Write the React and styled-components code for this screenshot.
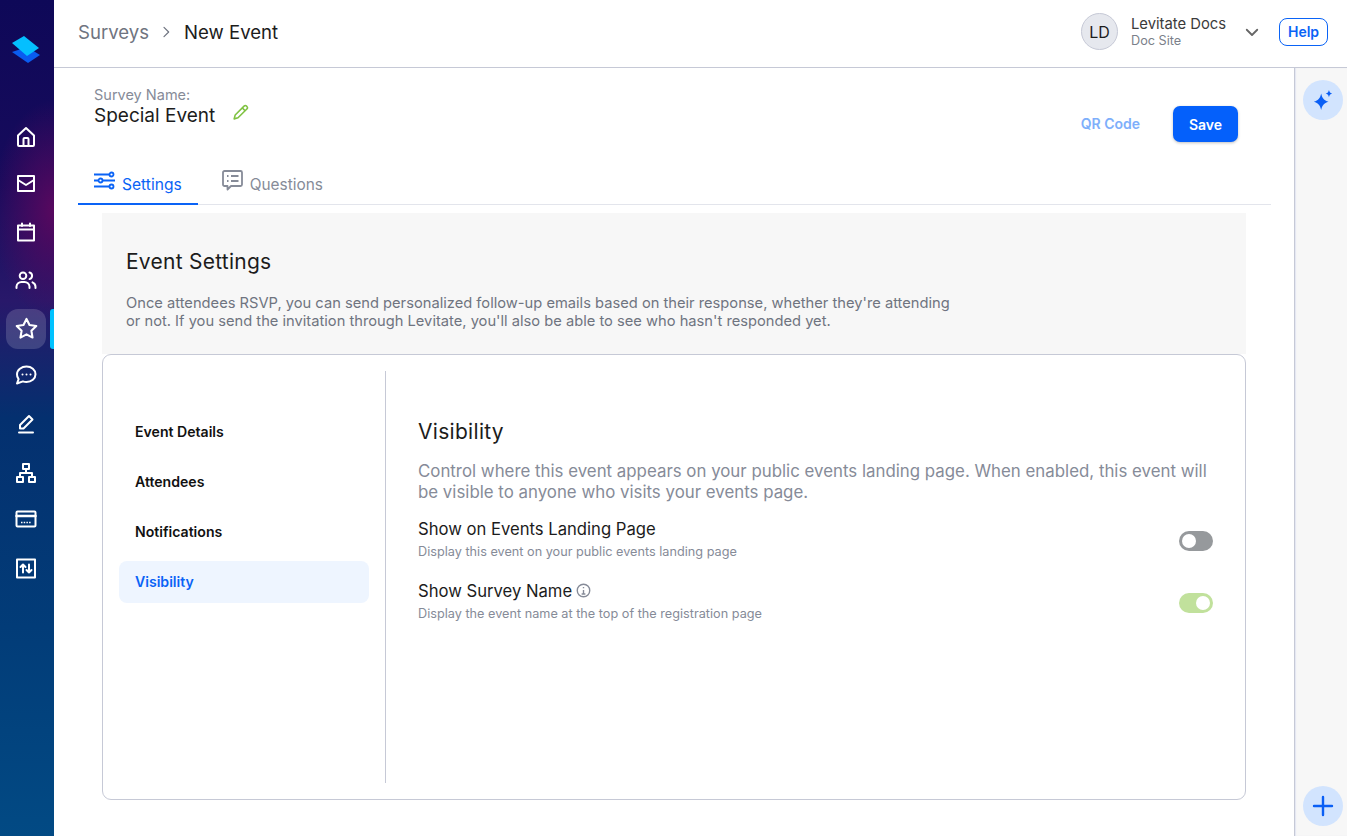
import React from 'react';
import styled, { createGlobalStyle } from 'styled-components';

const Global = createGlobalStyle`
  html, body { margin: 0; padding: 0; height: 100%; background: #fff; }
  * { box-sizing: border-box; }
  body { font-family: Inter, "Noto Sans", sans-serif; color: #1c1c1c; overflow: hidden; }
`;

const Page = styled.div`
  display: flex;
  width: 1347px;
  height: 836px;
  overflow: hidden;
`;

const Sidebar = styled.nav`
  width: 54px;
  flex: none;
  display: flex;
  flex-direction: column;
  align-items: stretch;
  padding-top: 35px;
  background:
    radial-gradient(ellipse 62px 110px at 100% 210px, #58085f 0%, rgba(88, 8, 95, 0) 100%),
    linear-gradient(180deg, #0e0858 0%, #170b5c 22%, #28186a 36%, #04306f 50%, #023c78 75%, #024a84 100%);
`;

const Logo = styled.div`
  height: 30px;
  display: flex;
  justify-content: center;
  margin-left: -2px;
  margin-bottom: 48px;
`;

const NavList = styled.div`
  display: flex;
  flex-direction: column;
`;

const NavItem = styled.div`
  position: relative;
  height: 47.9px;
  display: flex;
  align-items: center;
  justify-content: center;
  margin-right: 2px;
  color: #fff;
`;

const NavTile = styled.div`
  width: 40px;
  height: 40px;
  border-radius: 12px;
  display: flex;
  align-items: center;
  justify-content: center;
  background: ${({ $active }) => ($active ? 'rgba(255,255,255,0.16)' : 'transparent')};
`;

const ActiveMark = styled.span`
  position: absolute;
  right: -2px;
  top: 4px;
  width: 4px;
  height: 40px;
  border-radius: 3px 0 0 3px;
  background: #00c2ff;
`;

const Body = styled.div`
  flex: 1;
  min-width: 0;
  display: flex;
  flex-direction: column;
`;

const Header = styled.header`
  height: 68px;
  flex: none;
  display: flex;
  align-items: center;
  padding: 0 19px 4px 24px;
  border-bottom: 1px solid #c6c9d6;
`;

const Crumbs = styled.div`
  flex: 1;
  display: flex;
  align-items: center;
  font-size: 18.6px;
`;

const CrumbParent = styled.span`
  color: #6f7480;
`;

const CrumbChevron = styled.span`
  display: flex;
  margin: 0 10px 0 9px;
  color: #6f7480;
`;

const Avatar = styled.div`
  width: 37px;
  height: 37px;
  border-radius: 50%;
  display: flex;
  align-items: center;
  justify-content: center;
  background: #e6e8ee;
  border: 1px solid #c6c9d6;
  font-size: 16px;
  margin-right: 13px;
`;

const UserBlock = styled.div`
  display: flex;
  flex-direction: column;
  width: 112px;
`;

const UserName = styled.span`
  font-size: 14.8px;
  line-height: 18px;
  color: #3b3b3b;
`;

const UserSub = styled.span`
  font-size: 12.7px;
  line-height: 15px;
  color: #7b7f8a;
`;

const Caret = styled.span`
  display: flex;
  color: #666;
  margin: 0 18px 0 0;
`;

const HelpButton = styled.button`
  width: 49px;
  height: 28px;
  background: #fff;
  border: 1px solid #0a63f6;
  border-radius: 8px;
  color: #0a63f6;
  font: 600 14px Inter, sans-serif;
  padding: 0;
`;

const Split = styled.div`
  flex: 1;
  display: flex;
  min-height: 0;
`;

const Main = styled.main`
  flex: 1;
  min-width: 0;
  padding: 0 23px 0 24px;
`;

const TitleRow = styled.div`
  height: 93px;
  display: flex;
  justify-content: space-between;
  padding: 18px 33px 0 16px;
`;

const SurveyLabel = styled.div`
  font-size: 14.5px;
  line-height: 18px;
  color: #868b98;
`;

const SurveyName = styled.div`
  display: flex;
  align-items: flex-start;
  gap: 17px;
  margin-top: 1px;
  font-size: 19px;
  line-height: 22px;
`;

const PencilWrap = styled.span`
  display: flex;
  margin-top: -1px;
`;

const Actions = styled.div`
  display: flex;
  align-items: flex-start;
  gap: 33px;
  padding-top: 20px;
`;

const QrLink = styled.span`
  font-size: 14px;
  font-weight: 600;
  line-height: 36px;
  color: #7eaffb;
`;

const SaveButton = styled.button`
  width: 65px;
  height: 36px;
  background: #0460fb;
  border: 0;
  border-radius: 7px;
  color: #fff;
  font: 600 14px Inter, sans-serif;
  box-shadow: 0 1px 3px rgba(0, 0, 0, 0.25);
`;

const Tabs = styled.div`
  display: flex;
  height: 44px;
  border-bottom: 1px solid #e3e5ec;
`;

const Tab = styled.div`
  display: flex;
  align-items: center;
  gap: 7px;
  height: 44px;
  padding: 4px 16px 0;
  margin-left: ${({ $active }) => ($active ? '0' : '8px')};
  font-size: ${({ $active }) => ($active ? '15.6px' : '15.4px')};
  color: ${({ $active }) => ($active ? '#0a63f6' : '#868b98')};
  border-bottom: 2px solid ${({ $active }) => ($active ? '#0a63f6' : 'transparent')};
  svg { margin-top: -8px; }
`;

const Content = styled.div`
  margin: 8px 25px 0 24px;
`;

const IntroPanel = styled.section`
  height: 141px;
  padding: 36px 24px 0;
  background: #f7f7f7;
`;

const IntroTitle = styled.h2`
  margin: 0;
  font-size: 21px;
  letter-spacing: 0.25px;
  font-weight: 400;
  line-height: 26px;
`;

const IntroText = styled.p`
  margin: 19px 0 0;
  width: 835px;
  font-size: 14.7px;
  line-height: 18px;
  color: #6f7480;
`;

const Card = styled.section`
  height: 446px;
  display: flex;
  padding: 16px 0;
  background: #fff;
  border: 1px solid #c6c9d6;
  border-radius: 9px;
`;

const Menu = styled.div`
  width: 283px;
  flex: none;
  padding: 40px 16px 0;
  border-right: 1px solid #c6c9d6;
  display: flex;
  flex-direction: column;
  gap: 8px;
`;

const MenuItem = styled.div`
  height: 42px;
  width: 250px;
  display: flex;
  align-items: center;
  padding: 0 0 1px 16px;
  border-radius: 8px;
  font-size: 14.1px;
  font-weight: 600;
  color: ${({ $active }) => ($active ? '#0a63f6' : '#111')};
  background: ${({ $active }) => ($active ? '#eef5ff' : 'transparent')};
`;

const Detail = styled.div`
  flex: 1;
  padding: 48px 32px 0;
`;

const DetailTitle = styled.h3`
  margin: 0;
  font-size: 21px;
  letter-spacing: 0.3px;
  font-weight: 400;
  line-height: 26px;
`;

const DetailText = styled.p`
  margin: 16px 0 0;
  font-size: 16.85px;
  line-height: 21px;
  color: #868b98;
`;

const SettingRow = styled.div`
  display: flex;
  align-items: center;
  justify-content: space-between;
  height: 43px;
  margin-top: ${({ $gap }) => $gap}px;
`;

const SettingName = styled.div`
  display: flex;
  align-items: center;
  gap: 4px;
  font-size: 16.65px;
  line-height: 22px;
`;

const SettingHint = styled.div`
  font-size: 12.7px;
  line-height: 16px;
  margin-top: 4px;
  color: #868b98;
`;

const Switch = styled.span`
  position: relative;
  display: block;
  width: 34px;
  height: 20px;
  margin-top: 5px;
  border-radius: 10px;
  background: ${({ $on }) => ($on ? '#c1e19c' : '#96999c')};
  &::after {
    content: '';
    position: absolute;
    top: 3px;
    left: ${({ $on }) => ($on ? '17px' : '3px')};
    width: 14px;
    height: 14px;
    border-radius: 50%;
    background: #fff;
  }
`;

const Rail = styled.aside`
  width: 53px;
  flex: none;
  display: flex;
  flex-direction: column;
  justify-content: space-between;
  align-items: center;
  padding: 12px 0 10px 3px;
  background: #f7f7f7;
  border-left: 1px solid #c6c9d6;
  box-shadow: inset 1px 0 1px #e3e6f2;
`;

const RailButton = styled.div`
  width: 40px;
  height: 40px;
  border-radius: 50%;
  display: flex;
  align-items: center;
  justify-content: center;
  background: #d2e4fe;
  color: #0a5ff5;
`;

const Ico = ({ children, size = 24, stroke = 2 }) => (
  <svg width={size} height={size} viewBox="0 0 24 24" fill="none" stroke="currentColor" strokeWidth={stroke} strokeLinecap="round" strokeLinejoin="round">
    {children}
  </svg>
);

const navIcons = [
  <Ico key="home"><path d="M4 10.500 12 3l8 7.500V20a1 1 0 0 1-1 1H5a1 1 0 0 1-1-1z" /><path d="M9.500 21v-7a1 1 0 0 1 1-1h3a1 1 0 0 1 1 1v7" /></Ico>,
  <Ico key="mail"><rect x="4" y="3" width="16" height="15" /><path d="m4 7 8 5 8-5" /></Ico>,
  <Ico key="cal"><rect x="4" y="4.500" width="16" height="15" /><path d="M4 8.500h16M8 2.500V5M16 2.500V5" /></Ico>,
  <Ico key="users"><circle cx="9" cy="6.800" r="3.300" /><path d="M2.500 19v-1.500a5 5 0 0 1 5-4.500h3a5 5 0 0 1 5 4.500V19M15.500 3.500a3.400 3.400 0 0 1 0 6.600M18.500 13.300a5 5 0 0 1 3 4.500V19" /></Ico>,
  <Ico key="star" size={25}><path d="m12 2.800 2.900 5.900 6.500.9-4.700 4.600 1.100 6.500L12 17.650 6.200 20.700l1.100-6.500L2.600 9.600l6.500-.9z" /></Ico>,
  <Ico key="chat"><path d="M12.500 2.500c5 0 9 3.400 9 7.800s-4 7.700-9 7.700c-1.300 0-2.500-.2-3.600-.6L3 19.500l1.600-4.300a7.200 7.200 0 0 1-1.600-4.900c0-4.400 4.500-7.800 9.500-7.800z" /><path d="M8.500 10.500h.01M12.500 10.500h.01M16.500 10.500h.01" /></Ico>,
  <Ico key="edit"><path d="M5 20.500h14" /><path d="M6 16.500V13L15 4l3.500 3.500-9 9z" /></Ico>,
  <Ico key="tree"><rect x="9" y="4" width="6" height="5" /><rect x="3" y="17" width="6" height="5" /><rect x="15" y="17" width="6" height="5" /><path d="M12 9v4M6 17v-4h12v4" /></Ico>,
  <Ico key="card" size={24}><rect x="2.500" y="3.500" width="19" height="15" rx="1" /><path d="M2.500 8h19" strokeWidth="2.500" /><path d="M7 14.500h10" strokeWidth="1.500" strokeDasharray="1.500 1.200" strokeLinecap="butt" /></Ico>,
  <Ico key="swap"><rect x="3" y="3.500" width="18" height="18" /><path d="M9 16.500V8.500M6.500 11 9 8.500l2.500 2.500M15 8.500v8M12.500 14l2.500 2.500 2.500-2.500" /></Ico>,
];

const App = () => (
  <Page>
    <Global />
    <Sidebar>
      <Logo>
        <svg width="30" height="30" viewBox="0 0 30 30">
          <path d="M1 17 17 28 29 20 16 12z" fill="#0a5cf0" />
          <path d="M13 1 28 13 16 21 1 8z" fill="#04bfff" />
        </svg>
      </Logo>
      <NavList>
        {navIcons.map((icon, i) => (
          <NavItem key={i}>
            <NavTile $active={i === 4}>{icon}</NavTile>
            {i === 4 && <ActiveMark />}
          </NavItem>
        ))}
      </NavList>
    </Sidebar>
    <Body>
      <Header>
        <Crumbs>
          <CrumbParent>Surveys</CrumbParent>
          <CrumbChevron>
            <Ico size={16} stroke={1.800}><path d="m9 5 7 7-7 7" /></Ico>
          </CrumbChevron>
          <span>New Event</span>
        </Crumbs>
        <Avatar>LD</Avatar>
        <UserBlock>
          <UserName>Levitate Docs</UserName>
          <UserSub>Doc Site</UserSub>
        </UserBlock>
        <Caret>
          <Ico size={18} stroke={2.400}><path d="m5 9 7 7 7-7" /></Ico>
        </Caret>
        <HelpButton>Help</HelpButton>
      </Header>
      <Split>
        <Main>
          <TitleRow>
            <div>
              <SurveyLabel>Survey Name:</SurveyLabel>
              <SurveyName>
                Special Event
                <PencilWrap>
                  <svg width="17" height="17" viewBox="0 0 24 24" fill="none" stroke="#7fc241" strokeWidth="2.200" strokeLinejoin="round">
                    <path d="M3 21l1.500-5.500L17 3a2.500 2.500 0 0 1 3.500 0l.5.5a2.500 2.500 0 0 1 0 3.500L8.500 19.500z" />
                    <path d="M14.500 5.500l4 4" />
                  </svg>
                </PencilWrap>
              </SurveyName>
            </div>
            <Actions>
              <QrLink>QR Code</QrLink>
              <SaveButton>Save</SaveButton>
            </Actions>
          </TitleRow>
          <Tabs>
            <Tab $active>
              <svg width="21" height="19" viewBox="0 0 21 19" fill="none" stroke="currentColor" strokeWidth="1.800">
                <path d="M0 3.500h15M0 9.500h4M9 9.500h12M0 15.500h15" />
                <circle cx="17.500" cy="3.500" r="2" />
                <circle cx="6.500" cy="9.500" r="2" />
                <circle cx="17.500" cy="15.500" r="2" />
              </svg>
              Settings
            </Tab>
            <Tab>
              <svg width="21" height="21" viewBox="0 0 21 21" fill="none" stroke="currentColor" strokeWidth="1.800" strokeLinejoin="round">
                <path d="M1 2.500A1.500 1.500 0 0 1 2.500 1h16A1.500 1.500 0 0 1 20 2.500v12a1.500 1.500 0 0 1-1.500 1.500H9l-3.500 3.500V16h-3A1.500 1.500 0 0 1 1 14.500z" />
                <path d="M5 6h1.500M9 6h7.500M5 11h1.500M9 11h7.500" />
              </svg>
              Questions
            </Tab>
          </Tabs>
          <Content>
            <IntroPanel>
              <IntroTitle>Event Settings</IntroTitle>
              <IntroText>
                Once attendees RSVP, you can send personalized follow-up emails based on their response, whether they're attending or not. If you send the invitation through Levitate, you'll also be able to see who hasn't responded yet.
              </IntroText>
            </IntroPanel>
            <Card>
              <Menu>
                <MenuItem>Event Details</MenuItem>
                <MenuItem>Attendees</MenuItem>
                <MenuItem>Notifications</MenuItem>
                <MenuItem $active>Visibility</MenuItem>
              </Menu>
              <Detail>
                <DetailTitle>Visibility</DetailTitle>
                <DetailText>
                  Control where this event appears on your public events landing page. When enabled, this event will be visible to anyone who visits your events page.
                </DetailText>
                <SettingRow $gap={14}>
                  <div>
                    <SettingName>Show on Events Landing Page</SettingName>
                    <SettingHint>Display this event on your public events landing page</SettingHint>
                  </div>
                  <Switch />
                </SettingRow>
                <SettingRow $gap={19}>
                  <div>
                    <SettingName>
                      Show Survey Name
                      <svg width="15" height="15" viewBox="0 0 24 24" fill="none" stroke="#868b98" strokeWidth="2.200">
                        <circle cx="12" cy="12" r="10" />
                        <path d="M12 11v6M9 17.500h6M12 6.500v2" />
                      </svg>
                    </SettingName>
                    <SettingHint>Display the event name at the top of the registration page</SettingHint>
                  </div>
                  <Switch $on />
                </SettingRow>
              </Detail>
            </Card>
          </Content>
        </Main>
        <Rail>
          <RailButton>
            <svg width="22" height="22" viewBox="0 0 24 24" fill="currentColor">
              <path d="M10 5c1 5 3 7.500 8 9-5 1.500-7 4-8 9-1-5-3-7.500-8-9 5-1.500 7-4 8-9z" />
              <path d="M18.500 1c.5 2.300 1.400 3.300 3.500 4-2.100.7-3 1.700-3.500 4-.5-2.300-1.400-3.300-3.500-4 2.100-.7 3-1.700 3.500-4z" />
            </svg>
          </RailButton>
          <RailButton>
            <Ico size={24} stroke={2.400}><path d="M12 3v18M3 12h18" /></Ico>
          </RailButton>
        </Rail>
      </Split>
    </Body>
  </Page>
);

export default App;
